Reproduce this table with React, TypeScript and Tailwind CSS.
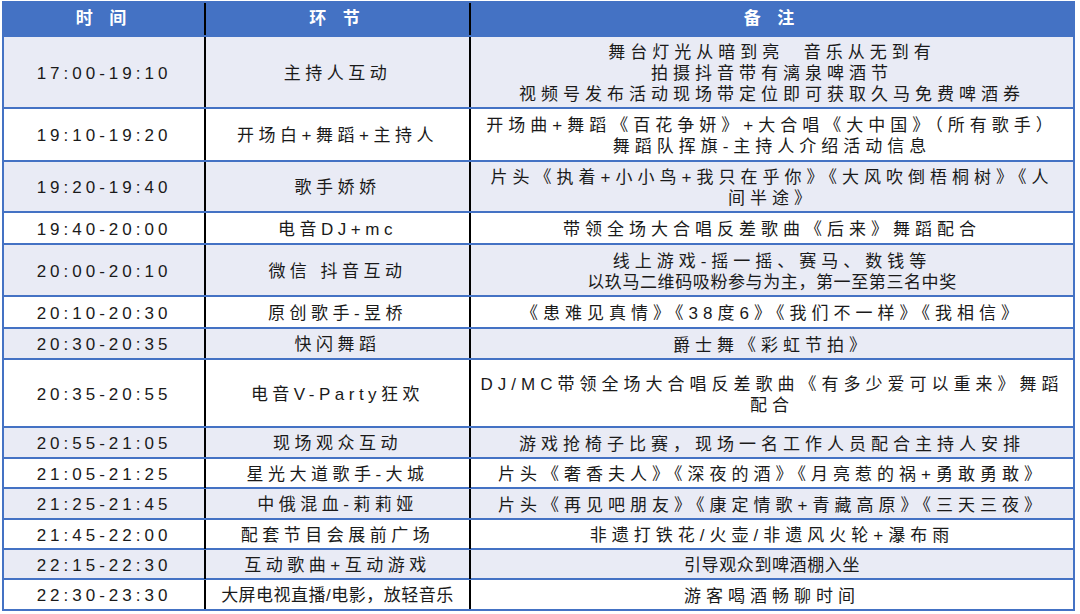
import React from 'react';

type Row = {
  time: string;
  item: string;
  note: string[];
  h: string;
  shade: boolean;
  itemTight?: boolean;
  noteTight?: boolean[];
};

const rows: Row[] = [
  { time: '17:00-19:10', item: '主持人互动', note: ['舞台灯光从暗到亮  音乐从无到有', '拍摄抖音带有漓泉啤酒节', '视频号发布活动现场带定位即可获取久马免费啤酒券'], h: 'h-[72px]', shade: true },
  { time: '19:10-19:20', item: '开场白+舞蹈+主持人', note: ['开场曲+舞蹈《百花争妍》+大合唱《大中国》（所有歌手）', '舞蹈队挥旗-主持人介绍活动信息'], h: 'h-[53px]', shade: false },
  { time: '19:20-19:40', item: '歌手娇娇', note: ['片头《执着+小小鸟+我只在乎你》《大风吹倒梧桐树》《人', '间半途》'], h: 'h-[51px]', shade: true },
  { time: '19:40-20:00', item: '电音DJ+mc', note: ['带领全场大合唱反差歌曲《后来》舞蹈配合'], h: 'h-[32px]', shade: false },
  { time: '20:00-20:10', item: '微信 抖音互动', note: ['线上游戏-摇一摇、赛马、数钱等', '以玖马二维码吸粉参与为主，第一至第三名中奖'], h: 'h-[52px]', shade: true, noteTight: [false, true] },
  { time: '20:10-20:30', item: '原创歌手-昱桥', note: ['《患难见真情》《38度6》《我们不一样》《我相信》'], h: 'h-[32px]', shade: false },
  { time: '20:30-20:35', item: '快闪舞蹈', note: ['爵士舞《彩虹节拍》'], h: 'h-[31px]', shade: true },
  { time: '20:35-20:55', item: '电音V-Party狂欢', note: ['DJ/MC带领全场大合唱反差歌曲《有多少爱可以重来》舞蹈', '配合'], h: 'h-[68px]', shade: false },
  { time: '20:55-21:05', item: '现场观众互动', note: ['游戏抢椅子比赛，现场一名工作人员配合主持人安排'], h: 'h-[31px]', shade: true },
  { time: '21:05-21:25', item: '星光大道歌手-大城', note: ['片头《奢香夫人》《深夜的酒》《月亮惹的祸+勇敢勇敢》'], h: 'h-[30px]', shade: false },
  { time: '21:25-21:45', item: '中俄混血-莉莉娅', note: ['片头《再见吧朋友》《康定情歌+青藏高原》《三天三夜》'], h: 'h-[31px]', shade: true },
  { time: '21:45-22:00', item: '配套节目会展前广场', note: ['非遗打铁花/火壶/非遗风火轮+瀑布雨'], h: 'h-[30px]', shade: false },
  { time: '22:15-22:30', item: '互动歌曲+互动游戏', note: ['引导观众到啤酒棚入坐'], h: 'h-[30px]', shade: true, noteTight: [true] },
  { time: '22:30-23:30', item: '大屏电视直播/电影，放轻音乐', note: ['游客喝酒畅聊时间'], h: 'h-[31px]', shade: false, itemTight: true },
];

export default function App() {
  return (
    <div className="w-[1080px] h-[614px] bg-white pt-[1px] pl-[2px] overflow-hidden font-['Liberation_Sans','Noto_Sans_CJK_SC',sans-serif] text-[#1a1a1a]">
      <div className="w-[1073px] border-x-2 border-[#4472c4]">
        {/* Header */}
        <div className="grid grid-cols-[202px_265px_602px] h-[36px] bg-[#4472c4] border-b-2 border-[#4472c4] text-white font-bold text-[17px] tracking-[6px] pt-[2px]">
          <div className="flex items-center justify-center border-r-2 border-black">时 间</div>
          <div className="flex items-center justify-center border-r-2 border-black">环 节</div>
          <div className="flex items-center justify-center">备 注</div>
        </div>

        {rows.map((r) => (
          <div
            key={r.time}
            className={`grid grid-cols-[202px_265px_602px] border-b-2 border-[#4472c4] ${r.h} ${r.shade ? 'bg-[#e9ebf5]' : 'bg-white'}`}
          >
            <div className="flex items-center justify-center border-r-2 border-black text-[17px] tracking-[4px] pt-[3px]">
              {r.time}
            </div>
            <div
              className={`flex items-center justify-center border-r-2 border-black text-[17px] whitespace-nowrap pt-[3px] ${r.itemTight ? 'tracking-[0.5px]' : 'tracking-[4.5px]'}`}
            >
              {r.item}
            </div>
            <div className="flex flex-col items-center justify-center text-[17px] leading-[21px] text-center whitespace-pre pt-[3px]">
              {r.note.map((line, i) => (
                <span key={i} className={r.noteTight && r.noteTight[i] ? 'tracking-[0.6px]' : 'tracking-[5px]'}>
                  {line}
                </span>
              ))}
            </div>
          </div>
        ))}
      </div>
    </div>
  );
}
